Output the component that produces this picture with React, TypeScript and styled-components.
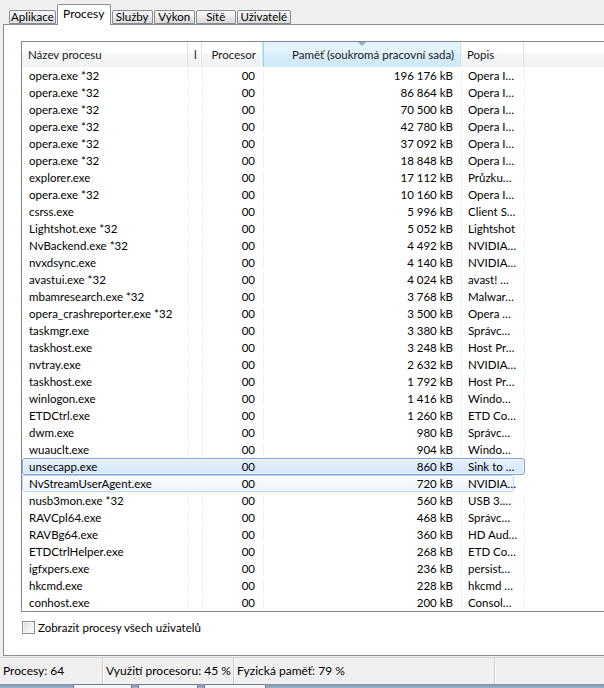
import React from "react";
import styled, { createGlobalStyle } from "styled-components";

const GlobalStyle = createGlobalStyle`
  html, body {
    margin: 0;
    padding: 0;
    overflow: hidden;
  }
  body {
    background: #f0f0f0;
    font-family: Lato, "Noto Sans", sans-serif;
    font-size: 11.5px;
    color: #000;
  }
`;

interface IProcess {
  name: string;
  cpu: string;
  mem: string;
  desc: string;
  state?: "selected" | "hover";
}

const processes: IProcess[] = [
  { name: "opera.exe *32", cpu: "00", mem: "196 176 kB", desc: "Opera I…" },
  { name: "opera.exe *32", cpu: "00", mem: "86 864 kB", desc: "Opera I…" },
  { name: "opera.exe *32", cpu: "00", mem: "70 500 kB", desc: "Opera I…" },
  { name: "opera.exe *32", cpu: "00", mem: "42 780 kB", desc: "Opera I…" },
  { name: "opera.exe *32", cpu: "00", mem: "37 092 kB", desc: "Opera I…" },
  { name: "opera.exe *32", cpu: "00", mem: "18 848 kB", desc: "Opera I…" },
  { name: "explorer.exe", cpu: "00", mem: "17 112 kB", desc: "Průzku…" },
  { name: "opera.exe *32", cpu: "00", mem: "10 160 kB", desc: "Opera I…" },
  { name: "csrss.exe", cpu: "00", mem: "5 996 kB", desc: "Client S…" },
  { name: "Lightshot.exe *32", cpu: "00", mem: "5 052 kB", desc: "Lightshot" },
  { name: "NvBackend.exe *32", cpu: "00", mem: "4 492 kB", desc: "NVIDIA…" },
  { name: "nvxdsync.exe", cpu: "00", mem: "4 140 kB", desc: "NVIDIA…" },
  { name: "avastui.exe *32", cpu: "00", mem: "4 024 kB", desc: "avast! …" },
  { name: "mbamresearch.exe *32", cpu: "00", mem: "3 768 kB", desc: "Malwar…" },
  { name: "opera_crashreporter.exe *32", cpu: "00", mem: "3 500 kB", desc: "Opera …" },
  { name: "taskmgr.exe", cpu: "00", mem: "3 380 kB", desc: "Správc…" },
  { name: "taskhost.exe", cpu: "00", mem: "3 248 kB", desc: "Host Pr…" },
  { name: "nvtray.exe", cpu: "00", mem: "2 632 kB", desc: "NVIDIA…" },
  { name: "taskhost.exe", cpu: "00", mem: "1 792 kB", desc: "Host Pr…" },
  { name: "winlogon.exe", cpu: "00", mem: "1 416 kB", desc: "Windo…" },
  { name: "ETDCtrl.exe", cpu: "00", mem: "1 260 kB", desc: "ETD Co…" },
  { name: "dwm.exe", cpu: "00", mem: "980 kB", desc: "Správc…" },
  { name: "wuauclt.exe", cpu: "00", mem: "904 kB", desc: "Windo…" },
  { name: "unsecapp.exe", cpu: "00", mem: "860 kB", desc: "Sink to …", state: "selected" },
  { name: "NvStreamUserAgent.exe", cpu: "00", mem: "720 kB", desc: "NVIDIA…", state: "hover" },
  { name: "nusb3mon.exe *32", cpu: "00", mem: "560 kB", desc: "USB 3.…" },
  { name: "RAVCpl64.exe", cpu: "00", mem: "468 kB", desc: "Správc…" },
  { name: "RAVBg64.exe", cpu: "00", mem: "360 kB", desc: "HD Aud…" },
  { name: "ETDCtrlHelper.exe", cpu: "00", mem: "268 kB", desc: "ETD Co…" },
  { name: "igfxpers.exe", cpu: "00", mem: "236 kB", desc: "persist…" },
  { name: "hkcmd.exe", cpu: "00", mem: "228 kB", desc: "hkcmd …" },
  { name: "conhost.exe", cpu: "00", mem: "200 kB", desc: "Consol…" },
];

const tabs = [
  { label: "Aplikace", width: 44 },
  { label: "Procesy", width: 54 },
  { label: "Služby", width: 41 },
  { label: "Výkon", width: 41 },
  { label: "Sítě", width: 40 },
  { label: "Uživatelé", width: 54 },
];

const COLUMNS = "166px 14px 61px 198px 63px";

const Window = styled.div`
  width: 604px;
  height: 688px;
  display: flex;
  flex-direction: column;
  overflow: hidden;
`;

const TabStrip = styled.div`
  height: 24px;
  display: flex;
  align-items: flex-end;
  gap: 1px;
  padding-left: 9px;
  position: relative;
  z-index: 2;
`;

const Tab = styled.div<{ active?: boolean; w: number }>`
  box-sizing: border-box;
  min-width: ${(p) => p.w}px;
  height: ${(p) => (p.active ? 21 : 14)}px;
  margin-bottom: ${(p) => (p.active ? -1 : 0)}px;
  padding: ${(p) => (p.active ? "2px 1px 0" : "0 1px")};
  border: 1px solid #898c95;
  border-bottom: ${(p) => (p.active ? "none" : "1px solid #898c95")};
  border-radius: 2px 2px 0 0;
  background: ${(p) =>
    p.active ? "#fff" : "linear-gradient(to bottom, #f7f7f7 0%, #efefef 50%, #e6e6e6 51%, #dcdcdc 100%)"};
  display: flex;
  align-items: ${(p) => (p.active ? "flex-start" : "center")};
  justify-content: center;
  font-size: ${(p) => (p.active ? 12 : 11.5)}px;
  line-height: 14px;
  white-space: nowrap;
`;

const Panel = styled.div`
  box-sizing: border-box;
  height: 632px;
  margin-left: 3px;
  margin-right: -40px;
  border: 1px solid #898c95;
  background: #fff;
  padding: 16px 0 0 17px;
  position: relative;
  z-index: 1;
`;

const ListBox = styled.div`
  box-sizing: border-box;
  height: 571px;
  border: 1px solid #828790;
  border-right: none;
  overflow: hidden;
`;

const Header = styled.div`
  height: 25px;
  display: grid;
  grid-template-columns: ${COLUMNS} 1fr;
  background: linear-gradient(to bottom, #ffffff 0%, #ffffff 45%, #f5f6f7 46%, #f1f2f4 100%);
`;

const HeaderCell = styled.div<{ align?: "left" | "right"; sorted?: boolean }>`
  position: relative;
  box-sizing: border-box;
  display: flex;
  align-items: center;
  justify-content: ${(p) => (p.align === "right" ? "flex-end" : "flex-start")};
  padding: 0 6px 1px 6px;
  border-right: 1px solid #dde0e5;
  box-shadow: inset -1px 0 0 #fbfbfb;
  white-space: nowrap;
  overflow: hidden;
  color: #1a1a1a;
  ${(p) =>
    p.sorted &&
    `
    background: linear-gradient(to bottom, #e3f4fd 0%, #e3f4fd 45%, #d9effb 46%, #cfe9f8 100%);
    border-left: 1px solid #96d9f9;
    border-right: 1px solid #c1e4f6;
    box-shadow: none;
  `}
`;

const NarrowLabel = styled.span`
  margin-left: 0;
`;

const SortArrow = styled.svg`
  position: absolute;
  top: 0;
  left: 50%;
  margin-left: -4px;
`;

const Rows = styled.div`
  display: flex;
  flex-direction: column;
`;

const Row = styled.div<{ state?: "selected" | "hover" }>`
  box-sizing: border-box;
  width: 503px;
  height: 17px;
  display: grid;
  grid-template-columns: ${COLUMNS};
  border: 1px solid transparent;
  border-radius: 3px;
  ${(p) =>
    p.state === "selected" &&
    `
    border-color: #7da2ce;
    background: linear-gradient(to bottom, #e4effd 0%, #d6e8fd 100%);
    box-shadow: inset 0 0 0 1px rgba(255,255,255,0.6);
  `}
  ${(p) =>
    p.state === "hover" &&
    `
    width: 492px;
    border-color: #b8d6fb;
    background: linear-gradient(to bottom, #fafbfd 0%, #eef5fd 100%);
    box-shadow: inset 0 0 0 1px rgba(255,255,255,0.8);
  `}
`;

const Cell = styled.div<{ align?: "left" | "right"; plain?: boolean }>`
  box-sizing: border-box;
  display: flex;
  align-items: center;
  justify-content: ${(p) => (p.align === "right" ? "flex-end" : "flex-start")};
  padding: ${(p) => (p.align === "right" ? "0 8px 0 0" : "0 0 0 6px")};
  border-right: 1px solid ${(p) => (p.plain ? "transparent" : "#edf2f8")};
  white-space: nowrap;
  overflow: hidden;
  line-height: 15px;
`;

const OptionRow = styled.label`
  display: flex;
  align-items: center;
  gap: 3px;
  margin-top: 8px;
  margin-left: 1px;
  height: 15px;
`;

const CheckBox = styled.span`
  box-sizing: border-box;
  width: 13px;
  height: 13px;
  border: 1px solid #8e8f8f;
  background: linear-gradient(135deg, #dcdcdc 0%, #f5f5f5 70%, #ffffff 100%);
  box-shadow: inset 0 0 0 1px #f4f4f4;
`;

const StatusBar = styled.div`
  box-sizing: border-box;
  margin-top: 1px;
  height: 27px;
  display: flex;
  border-top: 1px solid #d2d2d2;
  background: #f0f0f0;
`;

const StatusPart = styled.div<{ w?: number; last?: boolean }>`
  box-sizing: border-box;
  ${(p) => (p.w ? `width: ${p.w}px;` : "flex: 1;")}
  display: flex;
  align-items: center;
  padding: 0 0 1px 3px;
  border-right: ${(p) => (p.last ? "none" : "1px solid #cfcfcf")};
  box-shadow: ${(p) => (p.last ? "none" : "1px 0 0 #fafafa")};
  white-space: nowrap;
  font-size: 12px;
`;

const BottomStrip = styled.div`
  flex: 1;
  display: flex;
  gap: 6px;
  padding-left: 73px;
  background: linear-gradient(to bottom, #7f93ad 0%, #9fb1c7 100%);
`;

const StripSlot = styled.div<{ w: number }>`
  width: ${(p) => p.w}px;
  border: 1px solid #6d7f96;
  border-bottom: none;
  background: #f4f6f9;
`;

const App: React.FC = (): JSX.Element => {
  return (
    <Window>
      <GlobalStyle />
      <TabStrip>
        {tabs.map((tab) => (
          <Tab key={tab.label} w={tab.width} active={tab.label === "Procesy"}>
            {tab.label}
          </Tab>
        ))}
      </TabStrip>
      <Panel>
        <ListBox>
          <Header>
            <HeaderCell>Název procesu</HeaderCell>
            <HeaderCell>
              <NarrowLabel>l</NarrowLabel>
            </HeaderCell>
            <HeaderCell align="right">Procesor</HeaderCell>
            <HeaderCell align="right" sorted>
              <SortArrow width="8" height="4" viewBox="0 0 8 4">
                <path d="M0 0 L8 0 L4 4 Z" fill="#97abc3" />
              </SortArrow>
              Paměť (soukromá pracovní sada)
            </HeaderCell>
            <HeaderCell>Popis</HeaderCell>
            <HeaderCell />
          </Header>
          <Rows>
            {processes.map((proc, index) => (
              <Row key={index} state={proc.state}>
                <Cell plain={!!proc.state}>{proc.name}</Cell>
                <Cell plain={!!proc.state} />
                <Cell plain={!!proc.state} align="right">
                  {proc.cpu}
                </Cell>
                <Cell plain={!!proc.state} align="right">
                  {proc.mem}
                </Cell>
                <Cell plain={!!proc.state}>{proc.desc}</Cell>
              </Row>
            ))}
          </Rows>
        </ListBox>
        <OptionRow>
          <CheckBox />
          Zobrazit procesy všech uživatelů
        </OptionRow>
      </Panel>
      <StatusBar>
        <StatusPart w={103}>Procesy: 64</StatusPart>
        <StatusPart w={131}>Využití procesoru: 45 %</StatusPart>
        <StatusPart w={261}>Fyzická paměť: 79 %</StatusPart>
        <StatusPart last />
      </StatusBar>
      <BottomStrip>
        <StripSlot w={57} />
        <StripSlot w={58} />
        <StripSlot w={60} />
      </BottomStrip>
    </Window>
  );
};

export default App;
